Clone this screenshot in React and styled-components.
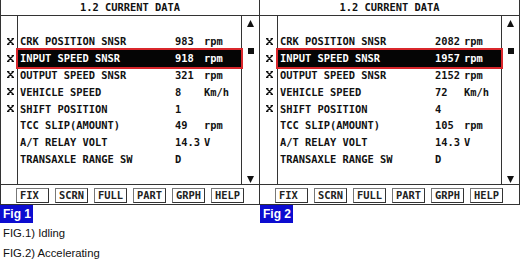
import React from "react";
import styled, { createGlobalStyle } from "styled-components";

const idling = [
  { name: "CRK POSITION SNSR", value: "983", unit: "rpm", mark: true },
  { name: "INPUT SPEED SNSR", value: "918", unit: "rpm", mark: true, active: true },
  { name: "OUTPUT SPEED SNSR", value: "321", unit: "rpm", mark: true },
  { name: "VEHICLE SPEED", value: "8", unit: "Km/h", mark: true },
  { name: "SHIFT POSITION", value: "1", unit: "", mark: true },
  { name: "TCC SLIP(AMOUNT)", value: "49", unit: "rpm" },
  { name: "A/T RELAY VOLT", value: "14.3", unit: "V" },
  { name: "TRANSAXLE RANGE SW", value: "D", unit: "" },
];

const accelerating = [
  { name: "CRK POSITION SNSR", value: "2082", unit: "rpm", mark: true },
  { name: "INPUT SPEED SNSR", value: "1957", unit: "rpm", mark: true, active: true },
  { name: "OUTPUT SPEED SNSR", value: "2152", unit: "rpm", mark: true },
  { name: "VEHICLE SPEED", value: "72", unit: "Km/h", mark: true },
  { name: "SHIFT POSITION", value: "4", unit: "", mark: true },
  { name: "TCC SLIP(AMOUNT)", value: "105", unit: "rpm" },
  { name: "A/T RELAY VOLT", value: "14.3", unit: "V" },
  { name: "TRANSAXLE RANGE SW", value: "D", unit: "" },
];

const buttons = ["FIX", "SCRN", "FULL", "PART", "GRPH", "HELP"];

function Marker() {
  return (
    <svg width="7" height="7" viewBox="0 0 7 7">
      <path
        d="M1 1L6 6M6 1L1 6M0 0.6H2.4M4.6 0.6H7M0 6.4H2.4M4.6 6.4H7"
        stroke="#111"
        strokeWidth="1.3"
        fill="none"
      />
    </svg>
  );
}

function Arrow({ down }) {
  return (
    <svg width="7" height="7" viewBox="0 0 7 7">
      <path d={down ? "M0 0H7L3.5 7Z" : "M3.5 0L7 7H0Z"} fill="#111" />
    </svg>
  );
}

function Scanner({ rows, label, first }) {
  return (
    <Panel>
      <Screen $first={first}>
        <Title>1.2 CURRENT DATA</Title>
        <Body>
          <Marks $first={first}>
            {rows.map((r, i) => (
              <MarkSlot key={i}>{r.mark && <Marker />}</MarkSlot>
            ))}
          </Marks>
          <List>
            {rows.map((r, i) => (
              <Row key={i} $active={r.active}>
                <Name>{r.name}</Name>
                <Value>{r.value}</Value>
                <Unit>{r.unit}</Unit>
              </Row>
            ))}
          </List>
          <Scroll>
            <Arrow />
            <Thumb />
            <Spacer />
            <Arrow down />
          </Scroll>
        </Body>
        <Keys>
          {buttons.map((b) => (
            <Key key={b}>{b}</Key>
          ))}
        </Keys>
      </Screen>
      <FigTag>{label}</FigTag>
    </Panel>
  );
}

export default function App() {
  return (
    <Page>
      <GlobalStyle />
      <Figures>
        <Scanner rows={idling} label="Fig 1" first />
        <Scanner rows={accelerating} label="Fig 2" />
      </Figures>
      <Captions>
        <div>FIG.1) Idling</div>
        <div>FIG.2) Accelerating</div>
      </Captions>
    </Page>
  );
}

//styled components

const GlobalStyle = createGlobalStyle`
  body {
    margin: 0;
    background: #fff;
  }
`;

const Page = styled.div`
  width: 520px;
  height: 260px;
  background: #fff;
  overflow: hidden;
`;

const Figures = styled.div`
  display: flex;
`;

const Panel = styled.div`
  width: 260px;
  display: flex;
  flex-direction: column;
  align-items: flex-start;
`;

const Screen = styled.div`
  width: 100%;
  box-sizing: border-box;
  border-left: ${(p) => (p.$first ? "1px solid #333" : "none")};
  border-right: 1px solid #333;
  border-bottom: 1px solid #333;
  font-family: "DejaVu Sans Mono", "Liberation Mono", monospace;
  font-weight: bold;
  font-size: 10.4px;
  color: #111;
`;

const Title = styled.div`
  height: 15px;
  line-height: 15px;
  text-align: center;
  border-bottom: 1px solid #333;
`;

const Body = styled.div`
  display: flex;
  height: 168px;
  border-bottom: 1px solid #333;
`;

const Marks = styled.div`
  width: ${(p) => (p.$first ? "16px" : "17px")};
  padding-top: 17px;
`;

const MarkSlot = styled.div`
  height: 16.8px;
  display: flex;
  align-items: center;
  justify-content: center;
  padding-left: 2px;
`;

const List = styled.div`
  width: 225px;
  box-sizing: border-box;
  border-left: 1px solid #333;
  border-right: 1px solid #333;
  padding-top: 17px;
`;

const Row = styled.div`
  display: grid;
  grid-template-columns: 155px auto 1fr;
  align-items: center;
  height: 16.8px;
  padding-left: 2px;
  white-space: pre;
  background: ${(p) => (p.$active ? "#050505" : "transparent")};
  color: ${(p) => (p.$active ? "#fff" : "#111")};
  outline: ${(p) => (p.$active ? "2px solid #d9262b" : "none")};
  position: relative;
`;

const Name = styled.span``;

const Value = styled.span`
  min-width: 25px;
  margin-right: 4px;
`;

const Unit = styled.span``;

const Scroll = styled.div`
  flex: 1;
  display: flex;
  flex-direction: column;
  align-items: center;
  padding: 4px 0 1px;
`;

const Thumb = styled.div`
  width: 6px;
  height: 6px;
  margin-top: 21px;
  background: #111;
`;

const Spacer = styled.div`
  flex: 1;
`;

const Keys = styled.div`
  display: flex;
  gap: 6px;
  height: 19px;
  padding: 3px 0 0 15px;
  box-sizing: border-box;
`;

const Key = styled.div`
  width: 33px;
  height: 15px;
  box-sizing: border-box;
  padding-left: 3px;
  line-height: 13px;
  border: 1px solid #777;
  border-right-color: #333;
  border-bottom-color: #333;
  background: #fff;
  color: #222;
`;

const FigTag = styled.div`
  height: 18px;
  line-height: 18px;
  padding: 0 2px 0 3px;
  background: #0c0cd0;
  color: #fff;
  font-family: "Liberation Sans", Arial, sans-serif;
  font-weight: bold;
  font-size: 12px;
`;

const Captions = styled.div`
  padding-left: 3px;
  font-family: "Liberation Sans", Arial, sans-serif;
  font-size: 11.3px;
  line-height: 20px;
  color: #111;
`;
